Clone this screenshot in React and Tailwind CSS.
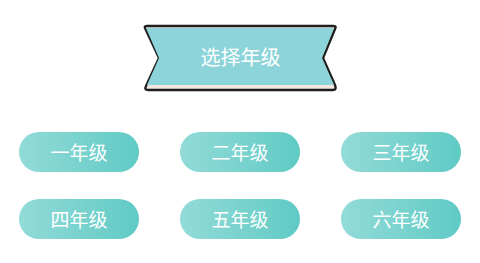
const grades = ["一年级", "二年级", "三年级", "四年级", "五年级", "六年级"];

const Banner = () => (
    <div className="relative w-[200px] h-[72px]">
        <svg width="200" height="72" viewBox="0 0 200 72" className="absolute inset-0">
            <path d="M4 6 Q3 4 6 4 L192 4 Q196 4 194 7 L182 36 L194 63 Q196 68 192 68 L7 68 Q3 68 5 64 L18 36 Z" fill="#f3e6dc" stroke="#1f1f1f" strokeWidth="2.4" strokeLinejoin="round" />
            <path d="M5 6 L193 6 L181 36 L193 63 L6 63 L18 36 Z" fill="#8cd4da" />
        </svg>
        <div className="absolute inset-0 flex items-center justify-center pb-[2px] text-white text-[20px]" style={{ fontFamily: '"Noto Sans CJK SC", sans-serif' }}>
            选择年级
        </div>
    </div>
);

const App = () => {
    return (
        <div className="w-[480px] h-[263px] bg-white flex flex-col items-center" style={{ fontFamily: '"Noto Sans CJK SC", sans-serif' }}>
            <div className="mt-[22px] ml-[1px]">
                <Banner />
            </div>
            <div className="mt-[38px] grid grid-cols-3 gap-x-[41px] gap-y-[27px]">
                {grades.map(g => (
                    <div key={g} className="w-[120px] h-[40px] rounded-full bg-gradient-to-r from-[#92dbd8] to-[#5fcac5] flex items-center justify-center text-white text-[19px]">
                        {g}
                    </div>
                ))}
            </div>
        </div>
    );
};

export default App;
